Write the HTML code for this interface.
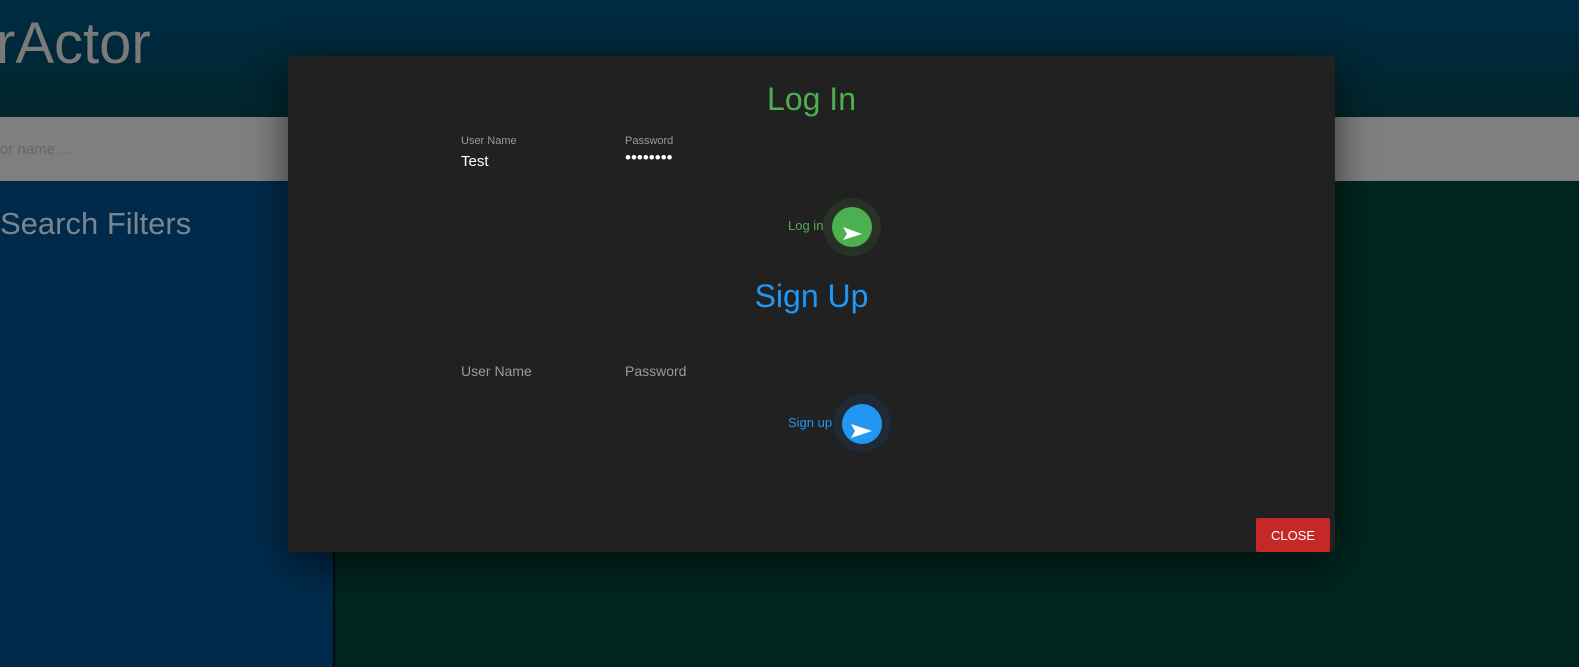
<!DOCTYPE html>
<html><head><style>
body{margin:0;width:1579px;height:667px;overflow:hidden;position:relative;font-family:"Liberation Sans",sans-serif;background:#00241d}
.hdr{position:absolute;left:0;top:0;width:1579px;height:117px;background:linear-gradient(#002b45,#00252a)}
.hdr span{position:absolute;left:-4px;top:10px;font-size:58px;color:#7a7a7a}
.search{position:absolute;left:0;top:117px;width:1579px;height:64px;background:#7f7f7f}
.search span{position:absolute;left:0;top:24px;font-size:15px;color:#666}
.left{position:absolute;left:0;top:181px;width:333px;height:486px;background:#002a4b;border-right:2px solid #0a0a0a}
.left span{position:absolute;left:0;top:25px;font-size:31px;color:#7a8590}
.right{position:absolute;left:335px;top:181px;right:0;height:486px;background:#00251f}
.dlg{position:absolute;left:288px;top:56px;width:1047px;height:496px;background:#212121;box-shadow:0 10px 40px rgba(0,0,0,.6);border-radius:2px}
.t{position:absolute;width:100%;text-align:center;font-size:32px}
.lbl{position:absolute;font-size:11px;color:#9a9a9a}
.val{position:absolute;font-size:15px;color:#fff}
.ph{position:absolute;font-size:14px;color:#9a9a9a}
.btn{position:absolute;font-size:13px}
.circ{position:absolute;width:40px;height:40px;border-radius:50%}
.halo{position:absolute;width:58px;height:58px;border-radius:50%}
.close{position:absolute;left:968px;top:462px;width:74px;height:34px;background:#c62828;color:#fff;font-size:13px;text-align:center;line-height:36px;border-radius:2px}
</style></head><body>
<div class="hdr"><span>rActor</span></div>
<div class="search"><span>or name ...</span></div>
<div class="left"><span>Search Filters</span></div>
<div class="right"></div>
<div class="dlg">
<div class="t" style="top:25px;left:0;color:#4caf50">Log In</div>
<div class="lbl" style="left:173px;top:79px">User Name</div>
<div class="lbl" style="left:337px;top:79px">Password</div>
<div class="val" style="left:173px;top:97px">Test</div>
<div class="val" style="left:337px;top:92px;font-size:17px">••••••••</div>
<div class="btn" style="left:500px;top:162px;color:#4caf50">Log in</div>
<div class="halo" style="left:535px;top:142px;background:#283028"></div>
<div class="circ" style="left:544px;top:151px;background:#4caf50"><svg width="40" height="40"><path d="M11 20 L30 27 L11 33 L15 27Z" fill="#fff"/></svg></div>
<div class="t" style="top:222px;left:0;color:#2196f3">Sign Up</div>
<div class="ph" style="left:173px;top:307px">User Name</div>
<div class="ph" style="left:337px;top:307px">Password</div>
<div class="btn" style="left:500px;top:359px;color:#2196f3">Sign up</div>
<div class="halo" style="left:545px;top:338px;background:#1f2a36"></div>
<div class="circ" style="left:554px;top:348px;background:#2196f3"><svg width="40" height="40"><path d="M9 20 L30 27 L9 34 L13 27Z" fill="#fff"/></svg></div>
<div class="close">CLOSE</div>
</div>
</body></html>
